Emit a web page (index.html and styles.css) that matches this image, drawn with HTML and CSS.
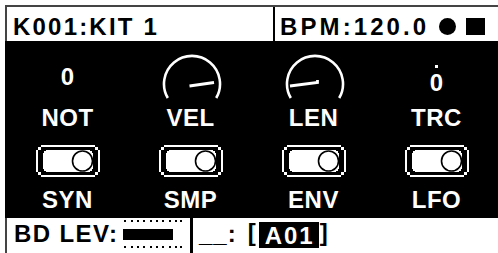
FILE: index.html
```html
<!DOCTYPE html>
<html>
<head>
<meta charset="utf-8">
<link rel="stylesheet" href="styles.css">
</head>
<body>
<div class="screen">
  <div class="topbar">
    <div class="kit">K001:KIT 1</div>
    <div class="tempo"><span class="bpm">BPM:120.0</span><span class="rec"></span><span class="stop"></span></div>
  </div>
  <div class="main">
    <div class="row knobs">
      <div class="cell">
        <div class="icon"><span class="val">0</span></div>
        <div class="lbl">NOT</div>
      </div>
      <div class="cell">
        <div class="icon">
          <svg class="knob" width="60" height="48" viewBox="0 0 60 48">
            <path d="M5.8 44 A28 28 0 1 1 54.2 44" fill="none" stroke="#fff" stroke-width="2.6"/>
            <path d="M27.5 32 L52 28.5" fill="none" stroke="#fff" stroke-width="2.8"/>
          </svg>
        </div>
        <div class="lbl">VEL</div>
      </div>
      <div class="cell">
        <div class="icon">
          <svg class="knob" width="60" height="48" viewBox="0 0 60 48">
            <path d="M5.8 44 A28 28 0 1 1 54.2 44" fill="none" stroke="#fff" stroke-width="2.6"/>
            <path d="M32.5 26 L32.5 28.5 L5 32" fill="none" stroke="#fff" stroke-width="2.8"/>
          </svg>
        </div>
        <div class="lbl">LEN</div>
      </div>
      <div class="cell">
        <div class="icon"><div class="center"><span class="pip"></span><span class="val">0</span></div></div>
        <div class="lbl">TRC</div>
      </div>
    </div>
    <div class="row switches">
      <div class="cell">
        <svg class="toggle" width="64" height="32" viewBox="0 0 64 32" shape-rendering="crispEdges">
          <g fill="#fff"><rect x="5" y="0" width="54" height="2"/><rect x="5" y="30" width="54" height="2"/><rect x="0" y="5" width="2" height="22"/><rect x="62" y="5" width="2" height="22"/><rect x="2" y="2" width="3" height="3"/><rect x="59" y="2" width="3" height="3"/><rect x="2" y="27" width="3" height="3"/><rect x="59" y="27" width="3" height="3"/></g>
          <rect x="7" y="5" width="50" height="22" rx="5" fill="#fff"/>
          <circle cx="46.5" cy="16" r="10" fill="#fff" stroke="#000" stroke-width="1.6" shape-rendering="auto"/>
        </svg>
        <div class="lbl">SYN</div>
      </div>
      <div class="cell">
        <svg class="toggle" width="64" height="32" viewBox="0 0 64 32" shape-rendering="crispEdges">
          <g fill="#fff"><rect x="5" y="0" width="54" height="2"/><rect x="5" y="30" width="54" height="2"/><rect x="0" y="5" width="2" height="22"/><rect x="62" y="5" width="2" height="22"/><rect x="2" y="2" width="3" height="3"/><rect x="59" y="2" width="3" height="3"/><rect x="2" y="27" width="3" height="3"/><rect x="59" y="27" width="3" height="3"/></g>
          <rect x="7" y="5" width="50" height="22" rx="5" fill="#fff"/>
          <circle cx="46.5" cy="16" r="10" fill="#fff" stroke="#000" stroke-width="1.6" shape-rendering="auto"/>
        </svg>
        <div class="lbl">SMP</div>
      </div>
      <div class="cell">
        <svg class="toggle" width="64" height="32" viewBox="0 0 64 32" shape-rendering="crispEdges">
          <g fill="#fff"><rect x="5" y="0" width="54" height="2"/><rect x="5" y="30" width="54" height="2"/><rect x="0" y="5" width="2" height="22"/><rect x="62" y="5" width="2" height="22"/><rect x="2" y="2" width="3" height="3"/><rect x="59" y="2" width="3" height="3"/><rect x="2" y="27" width="3" height="3"/><rect x="59" y="27" width="3" height="3"/></g>
          <rect x="7" y="5" width="50" height="22" rx="5" fill="#fff"/>
          <circle cx="46.5" cy="16" r="10" fill="#fff" stroke="#000" stroke-width="1.6" shape-rendering="auto"/>
        </svg>
        <div class="lbl">ENV</div>
      </div>
      <div class="cell">
        <svg class="toggle" width="64" height="32" viewBox="0 0 64 32" shape-rendering="crispEdges">
          <g fill="#fff"><rect x="5" y="0" width="54" height="2"/><rect x="5" y="30" width="54" height="2"/><rect x="0" y="5" width="2" height="22"/><rect x="62" y="5" width="2" height="22"/><rect x="2" y="2" width="3" height="3"/><rect x="59" y="2" width="3" height="3"/><rect x="2" y="27" width="3" height="3"/><rect x="59" y="27" width="3" height="3"/></g>
          <rect x="7" y="5" width="50" height="22" rx="5" fill="#fff"/>
          <circle cx="46.5" cy="16" r="10" fill="#fff" stroke="#000" stroke-width="1.6" shape-rendering="auto"/>
        </svg>
        <div class="lbl">LFO</div>
      </div>
    </div>
  </div>
  <div class="bottombar">
    <div class="level">
      <span class="lvtxt">BD LEV:</span>
      <svg class="meter" width="60" height="30" viewBox="0 0 60 30" shape-rendering="crispEdges">
        <g fill="#000">
          <rect x="1" y="0" width="2" height="2"/><rect x="8" y="0" width="2" height="2"/><rect x="14" y="0" width="2" height="2"/><rect x="20" y="0" width="2" height="2"/><rect x="27" y="0" width="2" height="2"/><rect x="33" y="0" width="2" height="2"/><rect x="39" y="0" width="2" height="2"/><rect x="46" y="0" width="2" height="2"/><rect x="52" y="0" width="2" height="2"/><rect x="57" y="0" width="2" height="2"/>
          <rect x="0" y="9" width="50" height="11"/>
          <rect x="1" y="26" width="2" height="2"/><rect x="8" y="26" width="2" height="2"/><rect x="14" y="26" width="2" height="2"/><rect x="20" y="26" width="2" height="2"/><rect x="27" y="26" width="2" height="2"/><rect x="33" y="26" width="2" height="2"/><rect x="39" y="26" width="2" height="2"/><rect x="46" y="26" width="2" height="2"/><rect x="52" y="26" width="2" height="2"/><rect x="57" y="26" width="2" height="2"/>
        </g>
      </svg>
    </div>
    <div class="pattern">
      <span class="blank">__:</span>
      <span class="br">[</span><span class="sel">A01</span><span class="br">]</span>
    </div>
  </div>
</div>
</body>
</html>
```
FILE: styles.css
```css
html, body {
  margin: 0;
  padding: 0;
  background: #fff;
}
body {
  width: 498px;
  height: 253px;
  overflow: hidden;
  font-family: "Liberation Sans", Arial, sans-serif;
  font-weight: bold;
}
.screen {
  margin: 5px 0 0 5px;
  width: 493px;
}
.topbar {
  display: flex;
  height: 36px;
  box-sizing: border-box;
  border-top: 2px solid #444;
  border-left: 2px solid #444;
  font-size: 24px;
  color: #000;
}
.kit {
  width: 268px;
  padding: 5px 0 0 6px;
  box-sizing: border-box;
  line-height: 29px;
  letter-spacing: 2.2px;
  border-right: 2px solid #000;
}
.tempo {
  flex: 1;
  display: flex;
  align-items: flex-start;
  padding: 5px 0 0 5px;
  line-height: 29px;
}
.bpm {
  letter-spacing: 3.1px;
}
.rec {
  width: 17px;
  height: 17px;
  border-radius: 50%;
  background: #000;
  margin: 6px 0 0 10px;
}
.stop {
  width: 19px;
  height: 17px;
  background: #000;
  margin: 6px 0 0 10px;
}
.main {
  background: #000;
  color: #fff;
  height: 177px;
  box-sizing: border-box;
  padding: 11px 0 6px 1px;
}
.row {
  display: grid;
  grid-template-columns: repeat(4, 1fr);
}
.cell {
  display: flex;
  flex-direction: column;
  align-items: center;
}
.icon {
  height: 50px;
  display: flex;
  align-items: center;
  justify-content: center;
}
.knob {
  display: block;
  margin: 2px 0 0 3px;
}
.val {
  font-size: 24px;
  line-height: 20px;
  display: block;
}
.center {
  display: flex;
  flex-direction: column;
  align-items: center;
  margin-top: 3px;
}
.pip {
  width: 3px;
  height: 3px;
  background: #fff;
  margin-bottom: 5px;
}
.lbl {
  font-size: 24px;
  line-height: 24px;
  height: 24px;
  margin-top: 4px;
  letter-spacing: 0.5px;
}
.switches {
  margin-top: 15px;
}
.toggle {
  display: block;
  height: 32px;
}
.switches .lbl {
  margin-top: 11px;
}
.bottombar {
  display: flex;
  height: 35px;
  border-left: 2px solid #444;
  font-size: 24px;
  color: #000;
}
.level {
  display: flex;
  align-items: flex-start;
  padding-left: 7px;
  box-sizing: border-box;
  border-right: 3px solid #000;
  width: 186px;
}
.lvtxt {
  line-height: 30px;
  margin-top: 1px;
  letter-spacing: 1.4px;
}
.meter {
  display: block;
  margin: 2px 0 0 5px;
}
.pattern {
  display: flex;
  align-items: flex-start;
  padding-left: 6px;
}
.blank {
  line-height: 30px;
  margin-top: 1px;
  letter-spacing: 1px;
}
.br {
  line-height: 30px;
  margin-top: 0;
  margin-left: 11px;
}
.br + .sel + .br {
  margin-left: 1px;
}
.sel {
  background: #000;
  color: #fff;
  margin-top: 4px;
  margin-left: 3px;
  padding: 0 4px 0 6px;
  height: 26px;
  line-height: 28px;
  letter-spacing: 2px;
}
```
